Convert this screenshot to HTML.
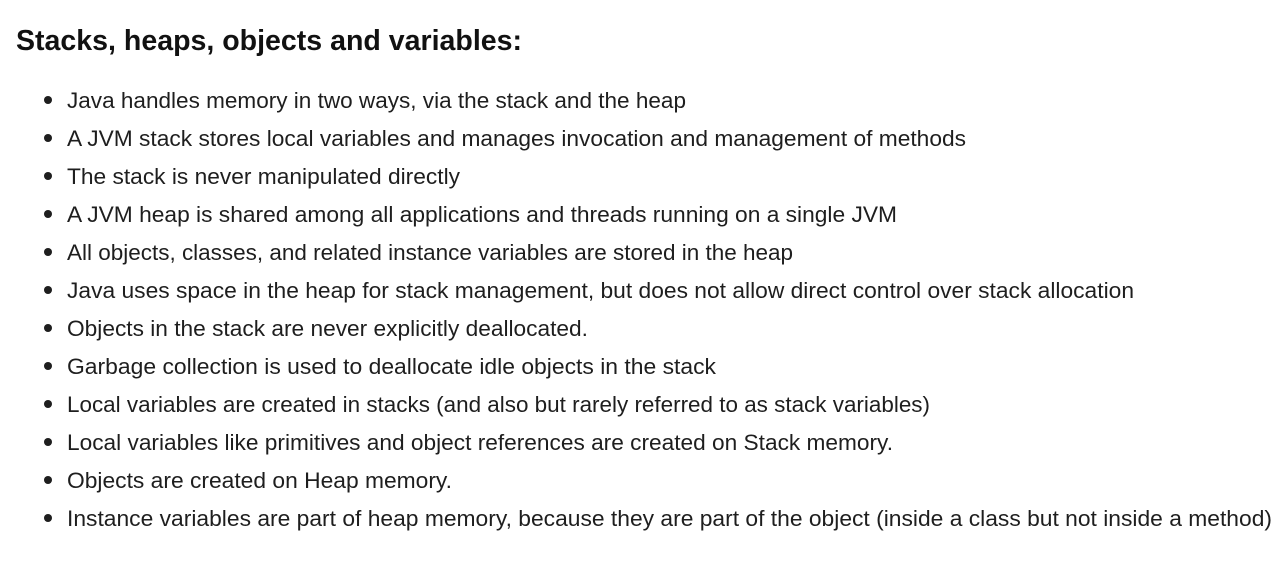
<!DOCTYPE html>
<html><head><meta charset="utf-8"><style>
body{margin:0;width:1278px;height:564px;background:#fff;font-family:"Liberation Sans",sans-serif;color:#1e1e1e;position:relative;overflow:hidden}
.h{position:absolute;left:16px;top:23px;font-size:29px;font-weight:bold;line-height:36px;white-space:nowrap;transform-origin:left center;color:#111}
.li{position:absolute;left:67px;font-size:22px;line-height:30px;white-space:nowrap;transform-origin:left center}
.b{position:absolute;left:44px;width:8px;height:8px;border-radius:50%;background:#1e1e1e}
</style></head><body>
<div class="h" data-w="506">Stacks, heaps, objects and variables:</div>
<div id="list"></div>
<script>
var items=[["Java handles memory in two ways, via the stack and the heap",619],
["A JVM stack stores local variables and manages invocation and management of methods",899],
["The stack is never manipulated directly",393],
["A JVM heap is shared among all applications and threads running on a single JVM",830],
["All objects, classes, and related instance variables are stored in the heap",726],
["Java uses space in the heap for stack management, but does not allow direct control over stack allocation",1067],
["Objects in the stack are never explicitly deallocated.",521],
["Garbage collection is used to deallocate idle objects in the stack",649],
["Local variables are created in stacks (and also but rarely referred to as stack variables)",863],
["Local variables like primitives and object references are created on Stack memory.",826],
["Objects are created on Heap memory.",385],
["Instance variables are part of heap memory, because they are part of the object (inside a class but not inside a method)",1205]];
var L=document.getElementById('list');
items.forEach(function(it,i){var c=100+38*i;
var b=document.createElement('div');b.className='b';b.style.top=(c-4)+'px';L.appendChild(b);
var d=document.createElement('div');d.className='li';d.textContent=it[0];d.style.top=(c-14)+'px';d.setAttribute('data-w',it[1]);L.appendChild(d);});
document.querySelectorAll('[data-w]').forEach(function(e){var w=e.getBoundingClientRect().width;e.style.transform='scaleX('+(e.getAttribute('data-w')/w)+')';});
</script>
</body></html>
